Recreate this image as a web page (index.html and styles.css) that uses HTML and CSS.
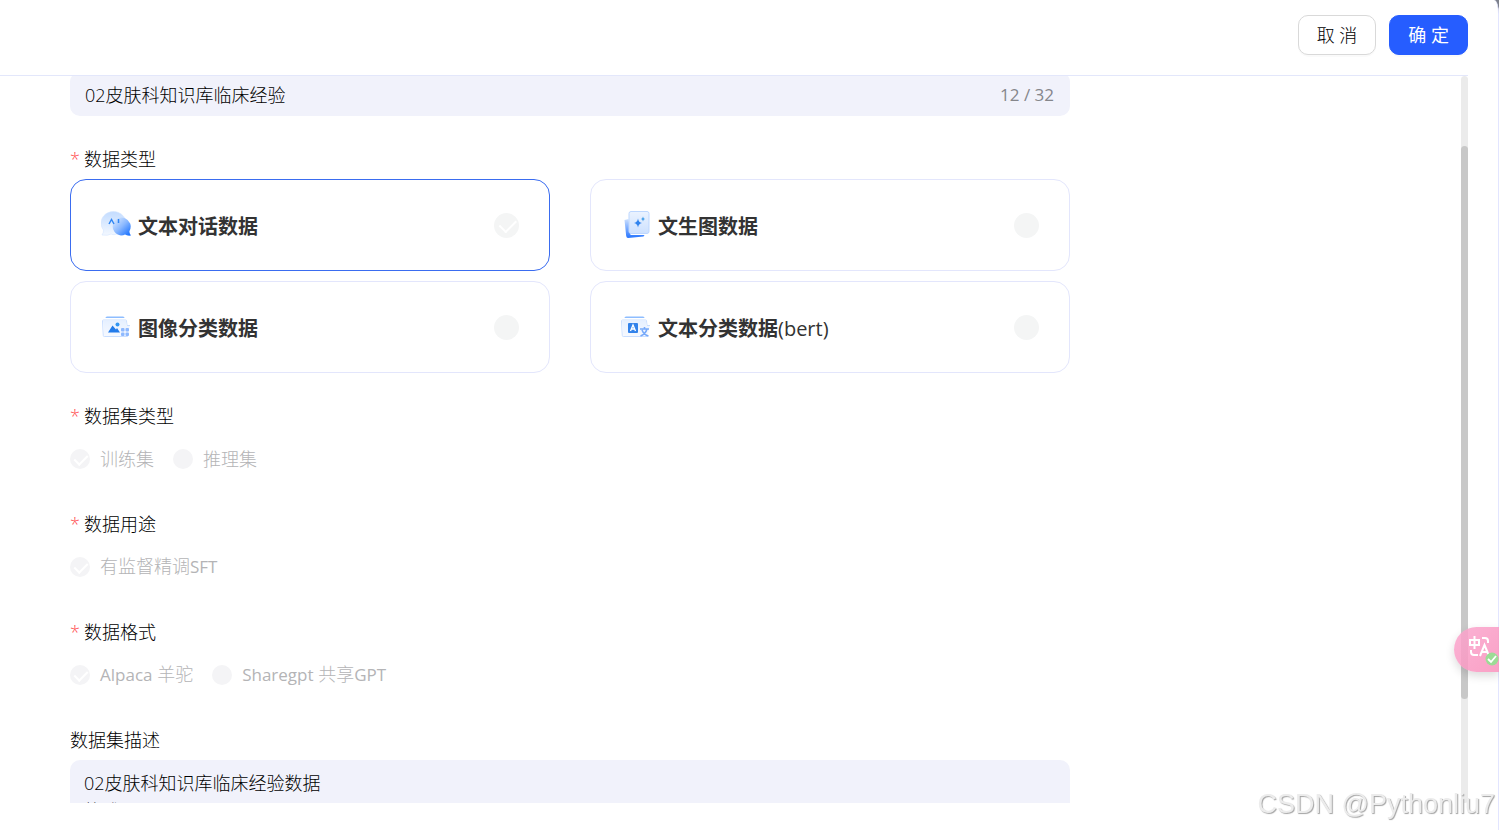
FILE: index.html
```html
<!DOCTYPE html>
<html lang="zh-CN">
<head>
<meta charset="utf-8">
<meta name="viewport" content="width=device-width, initial-scale=1">
<title>数据集</title>
<link rel="stylesheet" href="styles.css">
</head>
<body>
<div class="drawer">
  <header class="header">
    <button type="button" class="btn">取 消</button>
    <button type="button" class="btn btn-primary">确 定</button>
  </header>
  <main class="scroller">
    <form class="form">
      <div class="name-field">
        <input class="name-input" type="text" aria-label="数据集名称" value="02皮肤科知识库临床经验">
        <span class="count">12 / 32</span>
      </div>

      <fieldset class="group">
        <legend class="label required">数据类型</legend>
        <div class="cards">
          <label class="card card-selected">
            <svg class="icon" viewBox="0 0 30 30" aria-hidden="true">
              <defs>
                <linearGradient id="chatBack" x1="0" y1="0" x2="0" y2="1"><stop offset="0" stop-color="#c3dcff"/><stop offset="1" stop-color="#f3f8ff"/></linearGradient>
                <linearGradient id="chatFront" x1=".1" y1=".1" x2=".9" y2=".9"><stop offset="0" stop-color="#d3e5ff"/><stop offset=".5" stop-color="#8ab8ff"/><stop offset="1" stop-color="#2478ff"/></linearGradient>
              </defs>
              <path d="M1 25q2-3 1.500-5A12.500 11.500 0 1 1 14 24.500q-2 .5-4-.5-3 2-9 1z" fill="url(#chatBack)" stroke="#d5e6ff" stroke-width=".6"/>
              <path d="M30 25.500q-2-2.500-1.500-4.500A9 9 0 1 0 20 25.500q2.500 0 4-1 2 1.500 6 1z" fill="url(#chatFront)"/>
              <path d="M8 14l2.500-4.500L13 14M17.500 9v4" fill="none" stroke="#3086f4" stroke-width="1.500"/>
            </svg>
            <span class="card-title">文本对话数据</span>
            <input class="radio radio-large" type="radio" name="kind" checked disabled>
          </label>
          <label class="card">
            <svg class="icon" viewBox="0 0 30 30" aria-hidden="true">
              <defs>
                <linearGradient id="pageBack" x1="0" y1="0" x2="0" y2="1"><stop offset="0" stop-color="#cce0ff"/><stop offset="1" stop-color="#2675ff"/></linearGradient>
                <linearGradient id="pageFront" x1="0" y1="0" x2="0" y2="1"><stop offset="0" stop-color="#ebf3ff"/><stop offset="1" stop-color="#cde1ff"/></linearGradient>
              </defs>
              <path d="M3.500 10l4-1 2 16 14 0-1 1.500L7 28q-1.500 0-1.800-2z" fill="url(#pageBack)"/>
              <rect x="8" y="1.500" width="20" height="22" rx="2" fill="url(#pageFront)" stroke="#bdd7ff"/>
              <path d="M17 8.500q.6 4 4 4.500-3.400.6-4 4.500-.6-4-4-4.500 3.400-.6 4-4.500z" fill="#3284ee"/>
              <path d="M22 6.500q.3 2.200 2 2.500-1.700.3-2 2.500-.3-2.200-2-2.500 1.700-.3 2-2.500z" fill="#3b9be8"/>
            </svg>
            <span class="card-title">文生图数据</span>
            <input class="radio radio-large" type="radio" name="kind" disabled>
          </label>
          <label class="card">
            <svg class="icon" viewBox="0 0 30 30" aria-hidden="true">
              <defs><linearGradient id="folder" x1="0" y1="0" x2="0" y2="1"><stop offset="0" stop-color="#e6f0ff"/><stop offset="1" stop-color="#f6f9ff"/></linearGradient></defs>
              <path d="M4.500 6q0-1.500 1.500-1.500h16q1.500 0 1.500 1.500z" fill="#8ebdff"/>
              <path d="M1.500 9q0-1 1-1h22q1 0 1 1l.5 4.500h3M1.500 9l.8 14.500q0 1 1 1h23.500" fill="none" stroke="#c9deff"/>
              <path d="M2 8.500h23l.8 5.500h3l-2 10H3z" fill="url(#folder)"/>
              <path d="M7 20.500l4.500-7 3.500 4 1-1.500 3 4.500z" fill="#227bea"/>
              <circle cx="16.500" cy="12.500" r="2" fill="#3296f2"/>
              <g fill="#8eb9ff"><rect x="20" y="16" width="3.500" height="3.500" rx="1"/><rect x="24.500" y="16" width="3.500" height="3.500" rx="1"/><rect x="20" y="20.500" width="3.500" height="3.500" rx="1"/><rect x="24.500" y="20.500" width="3.500" height="3.500" rx="1"/></g>
            </svg>
            <span class="card-title">图像分类数据</span>
            <input class="radio radio-large" type="radio" name="kind" disabled>
          </label>
          <label class="card">
            <svg class="icon" viewBox="0 0 30 30" aria-hidden="true">
              <path d="M3.500 6q0-1.500 1.500-1.500h17q1.500 0 1.500 1.500z" fill="#8ebdff"/>
              <path d="M.5 9q0-1 1-1h23q1 0 1 1l.5 4.500h3M.5 9l.8 14.500q0 1 1 1h24.500" fill="none" stroke="#c9deff"/>
              <path d="M1 8.500h24l.8 5.500h3l-2 10H2z" fill="url(#folder)"/>
              <rect x="7" y="11" width="10" height="10" rx="1" fill="#3282ea"/>
              <path d="M9.500 19l2.500-6 2.500 6M10.500 17h3" fill="none" stroke="#fff" stroke-width="1.300"/>
              <path d="M19 17h9M23.500 15v2M19.500 24q5-2 6.500-7M21 18q2 5 6.500 6" fill="none" stroke="#76a9fa" stroke-width="1.600"/>
            </svg>
            <span class="card-title">文本分类数据<span class="latin">(bert)</span></span>
            <input class="radio radio-large" type="radio" name="kind" disabled>
          </label>
        </div>
      </fieldset>

      <fieldset class="group">
        <legend class="label required">数据集类型</legend>
        <div class="options">
          <label class="option"><input class="radio" type="radio" name="set" checked disabled><span>训练集</span></label>
          <label class="option"><input class="radio" type="radio" name="set" disabled><span>推理集</span></label>
        </div>
      </fieldset>

      <fieldset class="group">
        <legend class="label required">数据用途</legend>
        <div class="options">
          <label class="option"><input class="radio" type="radio" name="usage" checked disabled><span>有监督精调<span class="latin-small">SFT</span></span></label>
        </div>
      </fieldset>

      <fieldset class="group">
        <legend class="label required">数据格式</legend>
        <div class="options">
          <label class="option"><input class="radio" type="radio" name="format" checked disabled><span><span class="latin-small">Alpaca</span> 羊驼</span></label>
          <label class="option"><input class="radio" type="radio" name="format" disabled><span><span class="latin-small">Sharegpt</span> 共享<span class="latin-small">GPT</span></span></label>
        </div>
      </fieldset>

      <div class="group">
        <label class="label" for="description">数据集描述</label>
        <textarea class="description" id="description" rows="4">02皮肤科知识库临床经验数据
格式</textarea>
      </div>
    </form>
    <div class="track"><div class="thumb"></div></div>
  </main>
</div>
<button type="button" class="translate" aria-label="翻译">
  <svg class="translate-icon" viewBox="0 0 32 32" aria-hidden="true">
    <g fill="none" stroke="#fff" stroke-width="2">
      <path d="M3 6h9v5H3zM7.500 2v13" />
      <path d="M15 4h3q3 0 3 3v2M4 16v2q0 3 3 3h4" />
      <path d="M13 22l4.500-11L22 22M14.500 18h6" />
    </g>
    <circle cx="25" cy="25" r="6.500" fill="#9cdc96"/>
    <path d="M21 25l3 3 5-6" fill="none" stroke="#fff" stroke-width="1.800"/>
  </svg>
</button>
<div class="watermark">CSDN @Pythonliu7</div>
</body>
</html>
```
FILE: styles.css
```css
* {
  box-sizing: border-box;
}

body {
  margin: 0;
  background: #7d818c;
  color: #000;
  font: 300 18px/24px "Open Sans", "Noto Sans CJK SC", sans-serif;
  overflow: hidden;
}

button,
input,
textarea {
  font: inherit;
  color: inherit;
}

.drawer {
  display: flex;
  flex-direction: column;
  height: 100vh;
  padding: 0 30px 27px 0;
  background: #fff;
  border-right: 1px solid #e2e5ff;
  border-top-right-radius: 5px 14px;
}

.header {
  display: flex;
  flex: none;
  justify-content: flex-end;
  gap: 13px;
  padding: 15px 0 20px;
  border-bottom: 1px solid #e3e7fb;
}

.btn {
  height: 40px;
  padding: 0 18px;
  border: 1px solid #d9d9d9;
  border-radius: 10px;
  background: #fff;
  box-shadow: 0 2px 0 rgba(0, 0, 0, 0.02);
}

.btn-primary {
  border-color: #265dff;
  background: #265dff;
  color: #fff;
  font-weight: 400;
}

.scroller {
  position: relative;
  flex: 1;
  min-height: 0;
  overflow: hidden;
}

.form {
  display: flex;
  flex-direction: column;
  gap: 31px;
  max-width: 1070px;
  margin-top: -4px;
  padding-left: 70px;
}

.name-field {
  display: flex;
  align-items: center;
  height: 44px;
  padding: 2px 16px 0 15px;
  border-radius: 10px;
  background: #f1f2fb;
}

.name-input {
  flex: 1;
  min-width: 0;
  padding: 0;
  border: 0;
  background: none;
}

.count {
  color: #85868b;
  font-size: 17px;
  font-weight: 400;
}

.group {
  min-width: 0;
  margin: 0;
  padding: 0;
  border: 0;
}

.label {
  display: block;
  margin-bottom: 8px;
  padding: 0;
}

.required::before {
  content: "*";
  margin-right: 4px;
  color: #ff4d4f;
}

.cards {
  display: grid;
  grid-template-columns: 1fr 1fr;
  gap: 10px 40px;
}

.card {
  display: flex;
  align-items: center;
  height: 92px;
  padding: 0 30px;
  border: 1px solid #e3e6fc;
  border-radius: 16px;
}

.card-selected {
  border-color: #3a6cf0;
}

.icon {
  width: 30px;
  height: 30px;
  margin-right: 7px;
}

.card-title {
  flex: 1;
  padding-top: 3px;
  color: #333;
  font-size: 20px;
  font-weight: 700;
}

.latin {
  font-weight: 500;
}

.latin-small {
  font-size: 17px;
  font-weight: 400;
}

.radio {
  position: relative;
  flex: none;
  width: 20px;
  height: 20px;
  margin: 0;
  border-radius: 50%;
  background: #f4f4f6;
  appearance: none;
}

.radio:checked::after {
  content: "";
  position: absolute;
  top: 15%;
  left: 35%;
  width: 30%;
  height: 55%;
  border: solid #fff;
  border-width: 0 2px 2px 0;
  transform: rotate(45deg);
}

.radio-large {
  width: 25px;
  height: 25px;
  background: #f4f5f5;
}

.options {
  display: flex;
  align-items: center;
  gap: 19px;
  height: 45px;
}

.option {
  display: flex;
  align-items: center;
  gap: 10px;
  color: #b4b4b6;
}

.description {
  display: block;
  width: 100%;
  padding: 9px 14px;
  border: 0;
  border-radius: 10px;
  background: #f1f2fb;
  line-height: 28px;
  resize: none;
}

.track {
  position: absolute;
  top: 0;
  right: 0;
  bottom: 0;
  width: 7px;
  border-radius: 4px;
  background: #ebebeb;
}

.thumb {
  height: 76%;
  margin-top: 70px;
  border-radius: 4px;
  background: #c8c8c8;
}

.translate {
  position: fixed;
  top: 627px;
  right: 0;
  width: 45px;
  height: 45px;
  padding: 0 0 0 13px;
  border: 0;
  border-radius: 23px 0 0 23px;
  background: linear-gradient(135deg, rgba(250, 165, 205, 0.85), rgba(249, 145, 188, 0.85));
  box-shadow: 0 4px 10px rgba(0, 0, 0, 0.14);
  overflow: hidden;
}

.translate-icon {
  display: block;
  width: 32px;
  height: 32px;
}

.watermark {
  position: fixed;
  right: 4px;
  bottom: 8px;
  color: #ececec;
  font: 400 27px/36px "Liberation Sans", sans-serif;
  text-shadow: 1px 1px 1px #a4a4a4;
}
```
